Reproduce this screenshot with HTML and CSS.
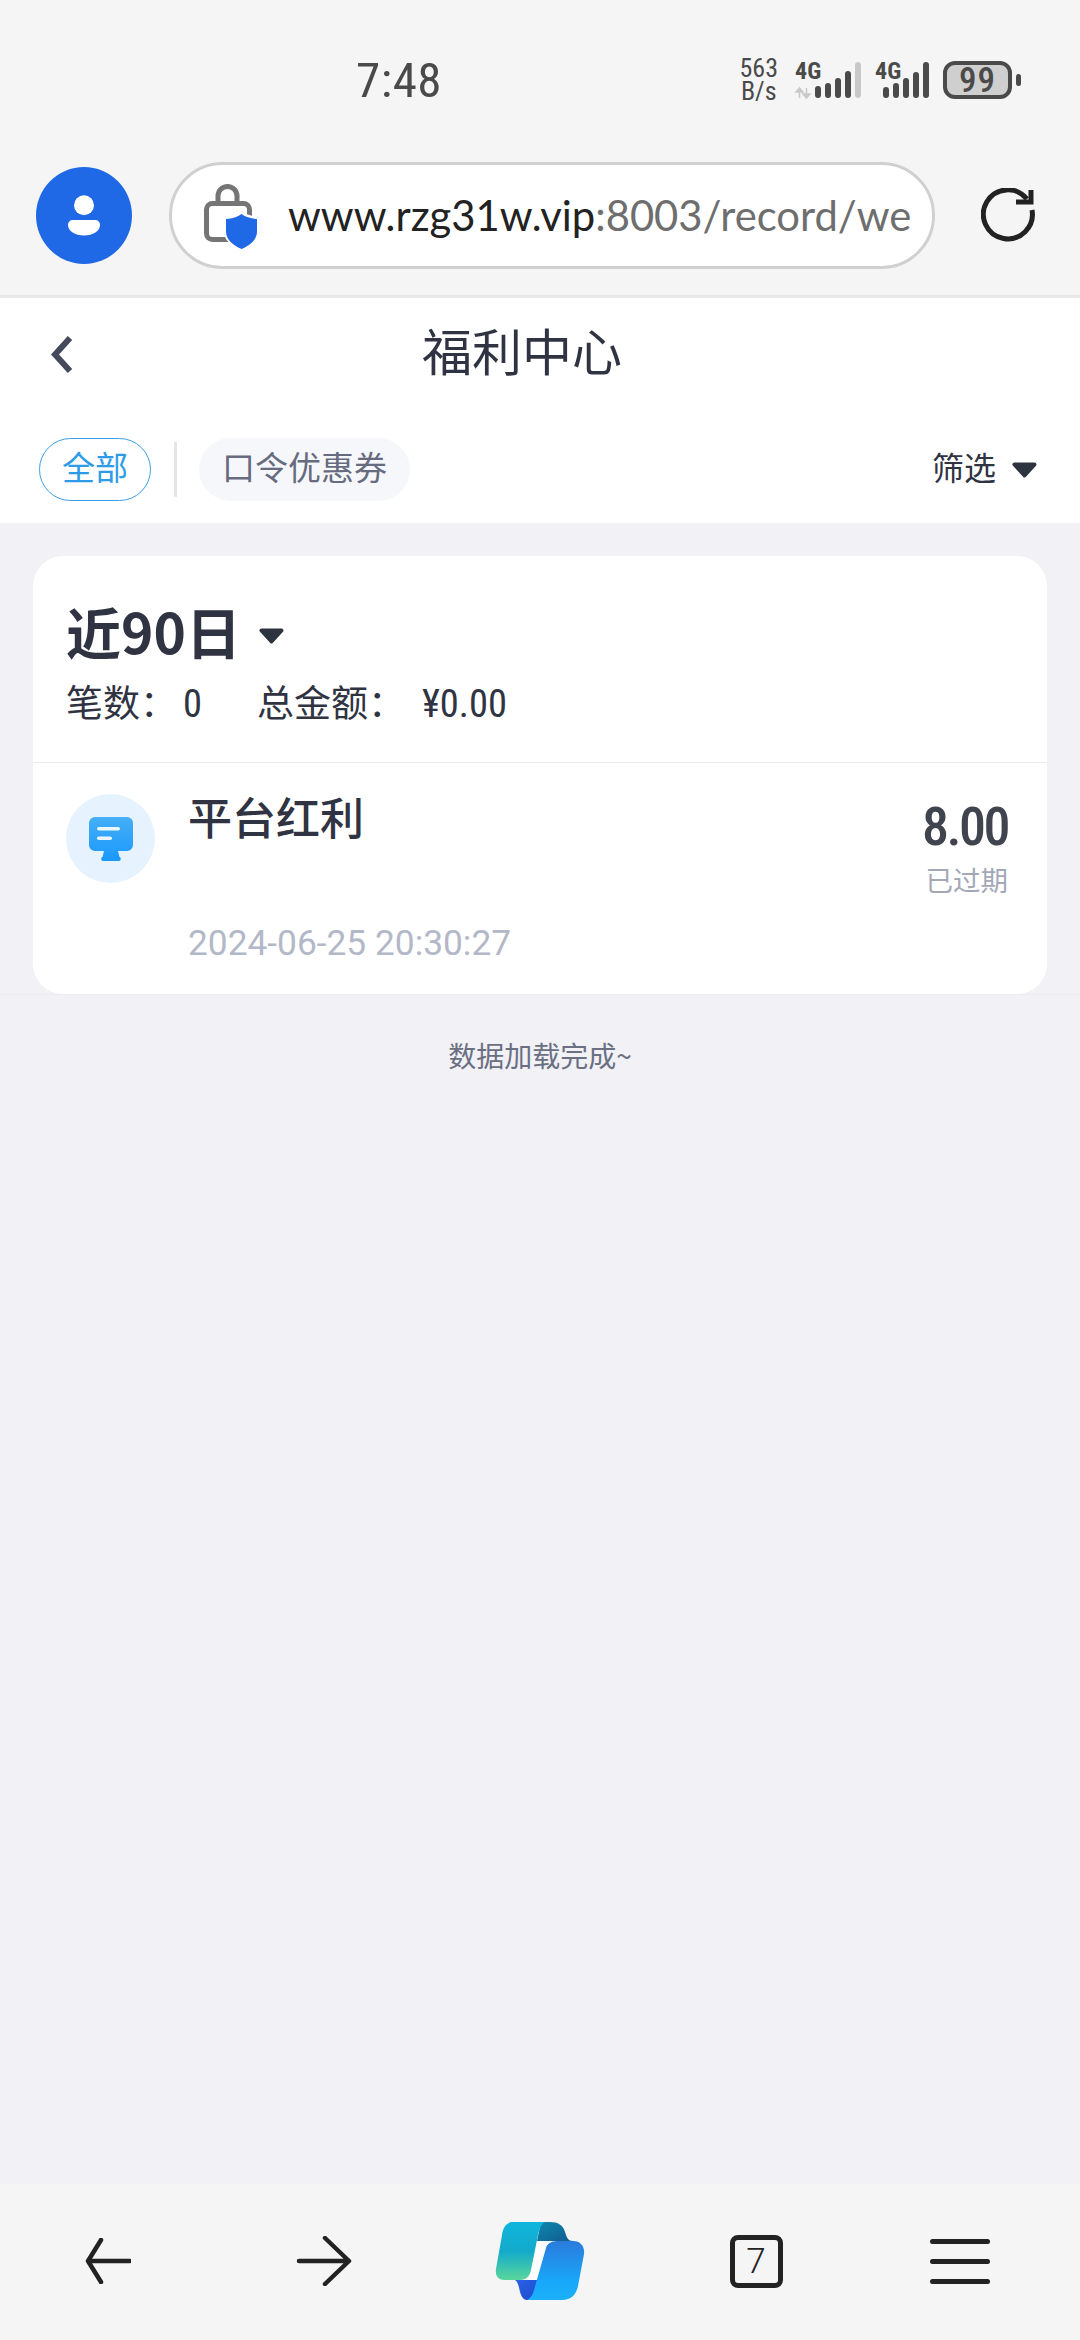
FILE: index.html
```html
<!DOCTYPE html>
<html lang="zh">
<head>
<meta charset="utf-8">
<title>福利中心</title>
<link rel="stylesheet" href="styles.css">
</head>
<body>
<div class="page">
  <header class="chrome">
    <div class="status">
      <span class="time">7:48</span>
      <span class="speed">563<br>B/s</span>
      <svg class="signals" width="134" height="40" viewBox="795 59 134 40">
        <text class="sig-text" x="795" y="78">4G</text>
        <path d="M799.5 97V88M799.5 87l-3.5 4h7zM806.5 87v9M806.5 97l3.5-4h-7z" fill="#c8c8c8" stroke="#c8c8c8" stroke-width="1.5"/>
        <g fill="#4a4a4a">
          <rect x="815" y="85" width="6" height="12" rx="3"/>
          <rect x="825" y="82" width="6" height="15" rx="3"/>
          <rect x="835" y="77" width="6" height="20" rx="3"/>
          <rect x="845" y="70" width="6" height="27" rx="3"/>
          <rect x="855" y="61" width="6" height="36" rx="3" fill="#c8c8c8"/>
        </g>
        <text class="sig-text" x="875" y="78">4G</text>
        <g fill="#4a4a4a">
          <rect x="883" y="86" width="6" height="11" rx="3"/>
          <rect x="893" y="82" width="6" height="15" rx="3"/>
          <rect x="903" y="77" width="6" height="20" rx="3"/>
          <rect x="913" y="71" width="6" height="26" rx="3"/>
          <rect x="923" y="61" width="6" height="36" rx="3"/>
        </g>
      </svg>
      <svg class="battery" width="78" height="38" viewBox="943 60 78 38">
        <rect x="945" y="62" width="65" height="34" rx="10" fill="#cfcfcf" stroke="#4a4a4a" stroke-width="4"/>
        <text class="bat-text" x="977.5" y="91" text-anchor="middle">99</text>
        <rect x="1016" y="73" width="5" height="12" rx="2.5" fill="#4a4a4a"/>
      </svg>
    </div>
    <div class="browser">
      <div class="avatar">
        <svg width="32" height="41" viewBox="0 0 32 41">
          <circle cx="16" cy="10.300" r="10" fill="#fff"/>
          <path d="M5 25h22c3 0 5 2 5 5 0 6-7 10.500-16 10.500S0 36 0 30c0-3 2-5 5-5z" fill="#fff"/>
        </svg>
      </div>
      <div class="url">
        <svg class="lock" width="53" height="66" viewBox="204 186 53 66">
          <path d="M218 205v-6a9.500 9.500 0 0 1 19 0v6" fill="none" stroke="#757575" stroke-width="5"/>
          <rect x="206.500" y="206.500" width="43" height="36" rx="6" fill="none" stroke="#757575" stroke-width="5"/>
          <path d="M241.500 214c4 3 9 5 15.500 5.500l2 1.500v14c0 8-7.500 14-17.500 18.500-10-4.500-17.500-10.500-17.500-18.500v-16c6.500-.5 13.500-2.500 17.500-5.500z" fill="#fff"/>
          <path d="M241.500 217c4 3 9 4.500 15.500 5v12.500c0 8-6.500 13.500-15.500 17.500-9-4-15.500-9.500-15.500-17.500V222c6.500-.5 11.500-2 15.500-5z" fill="#1f69e6"/>
        </svg>
        <span class="url-text">www.rzg31w.vip<span class="url-rest">:8003/record/we</span></span>
      </div>
      <svg class="reload" width="56" height="56" viewBox="0 0 56 56">
        <path d="M46 11A24.500 24.500 0 1 0 51 22" fill="none" stroke="#222" stroke-width="5"/>
        <path d="M35 14h15V2" fill="none" stroke="#222" stroke-width="5"/>
      </svg>
    </div>
  </header>

  <section class="head">
    <div class="nav">
      <svg class="back" width="22" height="39" viewBox="0 0 22 39">
        <path d="M19 3L4 19.500 19 36" fill="none" stroke="#444a5c" stroke-width="6"/>
      </svg>
      <h1 class="title">福利中心</h1>
    </div>
    <div class="tabs">
      <span class="tab tab-on">全部</span>
      <i class="tab-sep"></i>
      <span class="tab tab-off">口令优惠券</span>
      <span class="filter"><span class="filter-label">筛选</span>
        <svg class="caret" width="25" height="16" viewBox="0 0 25 16"><path d="M2.500 2.500h20L12.500 13.500z" fill="#2c3440" stroke="#2c3440" stroke-width="4" stroke-linejoin="round"/></svg>
      </span>
    </div>
  </section>

  <main class="body">
    <div class="band">
      <article class="card">
        <div class="card-head">
          <div class="range">近90日
            <svg class="caret range-caret" width="25" height="16" viewBox="0 0 25 16"><path d="M2.500 2.500h20L12.500 13.500z" fill="#2c3440" stroke="#2c3440" stroke-width="4" stroke-linejoin="round"/></svg>
          </div>
          <div class="totals">
            <span class="tot-count">笔数：<span class="din tot-num">0</span></span>
            <span>总金额：<span class="din tot-sum">¥0.00</span></span>
          </div>
        </div>
        <div class="item">
          <div class="item-icon">
            <svg width="44" height="44" viewBox="0 0 44 44">
              <defs><linearGradient id="mon" x1="0" y1="0" x2="0" y2="1"><stop offset="0" stop-color="#46aef5"/><stop offset="1" stop-color="#1a98ff"/></linearGradient></defs>
              <path d="M6 0h32a6 6 0 0 1 6 6v22a6 6 0 0 1-6 6H29l1.500 6c2 .5 1.500 4-.5 4H14c-2 0-2.500-3.500-.5-4L15 34H6a6 6 0 0 1-6-6V6a6 6 0 0 1 6-6z" fill="url(#mon)"/>
              <rect x="8" y="10" width="23" height="3.500" rx="1.700" fill="#fff" opacity=".9"/>
              <rect x="8" y="19.500" width="15" height="3.500" rx="1.700" fill="#fff" opacity=".9"/>
            </svg>
          </div>
          <div class="item-main">
            <div class="item-name">平台红利</div>
            <div class="item-date">2024-06-25 20:30:27</div>
          </div>
          <div class="item-side">
            <div class="item-amount">8.00</div>
            <div class="item-state">已过期</div>
          </div>
        </div>
      </article>
    </div>
    <p class="done">数据加载完成~</p>
  </main>

  <footer class="bar">
    <div class="bar-cell">
      <svg width="46" height="46" viewBox="0 0 46 46"><path d="M16 2L3 23l13 21M3 23h42" fill="none" stroke="#222" stroke-width="4.500" stroke-linecap="round" stroke-linejoin="round"/></svg>
    </div>
    <div class="bar-cell">
      <svg width="56" height="50" viewBox="0 0 56 50"><path d="M29 2l24 23-24 23M3 25h49" fill="none" stroke="#222" stroke-width="4.500" stroke-linecap="round" stroke-linejoin="round"/></svg>
    </div>
    <div class="bar-cell">
      <svg class="copilot" width="90" height="78" viewBox="0 0 90 78">
        <defs>
          <linearGradient id="cL" x1="0" y1="0" x2="0" y2="1"><stop offset="0" stop-color="#0fb5dd"/><stop offset=".5" stop-color="#13aacb"/><stop offset="1" stop-color="#5ad79c"/></linearGradient>
          <linearGradient id="cD" x1="0" y1="0" x2="1" y2="1"><stop offset="0" stop-color="#0d88ad"/><stop offset="1" stop-color="#115c8e"/></linearGradient>
          <linearGradient id="cR" x1="0" y1="0" x2="0" y2="1"><stop offset="0" stop-color="#2b7bdb"/><stop offset=".7" stop-color="#18a8fb"/><stop offset="1" stop-color="#1cb0f8"/></linearGradient>
          <linearGradient id="cB" x1="0" y1="0" x2="1" y2="1"><stop offset="0" stop-color="#2b62e8"/><stop offset="1" stop-color="#1a49c8"/></linearGradient>
        </defs>
        <path d="M46 0h9c8 0 13 3 15 10 2 6 3 9 8 9H42z" fill="url(#cD)"/>
        <path d="M20 58h26l-6 20H31c-3-1-5-4-6-8-1-5-2-10-5-12z" fill="url(#cB)"/>
        <path d="M42 19h14L46 58H33z" fill="#fff"/>
        <path d="M18 0h32c-4 2-6 8-7 13l-7 35c-1 6-5 10-11 10H9c-6 0-9-5-8-11L7 13C8 5 12 0 18 0z" fill="url(#cL)"/>
        <path d="M62 19h16c8 0 12 6 11 13l-6 32c-2 9-7 14-16 14H32c4-2 6-6 7-10l12-42c1-4 5-7 11-7z" fill="url(#cR)"/>
      </svg>
    </div>
    <div class="bar-cell">
      <span class="count">7</span>
    </div>
    <div class="bar-cell bar-menu">
      <span class="menu"><i></i><i></i><i></i></span>
    </div>
  </footer>
</div>
</body>
</html>
```

FILE: styles.css
```css
* { box-sizing: border-box; }
html, body { margin: 0; padding: 0; }
body { font-family: "Noto Sans CJK SC", "Noto Sans", sans-serif; color: #2f3342; }
.page { width: 1080px; height: 2340px; display: flex; flex-direction: column; background: #f1f1f6; overflow: hidden; }

.chrome { height: 298px; background: #f5f5f5; border-bottom: 3px solid #e8e8e8; flex: none; }
.status { height: 160px; padding: 0 59px 0 356px; display: flex; align-items: center; color: #4a4a4a; }
.time { font: 400 49px/1 "Roboto Condensed", Roboto, sans-serif; letter-spacing: .5px; color: #4a4a4a; }
.speed { margin-left: auto; font: 400 26px/23px "Roboto Condensed", Roboto, sans-serif; color: #4a4a4a; text-align: center; }
.signals { margin-left: 17px; overflow: visible; }
.sig-text { font: 700 24px "Roboto Condensed", Roboto, sans-serif; fill: #4a4a4a; }
.battery { margin-left: 14px; overflow: visible; }
.bat-text { font: 500 35px "Roboto Condensed", Roboto, sans-serif; letter-spacing: 1px; fill: #4a4a4a; }

.browser { display: flex; align-items: center; padding: 2px 0 26px 36px; }
.avatar { width: 96px; height: 97px; border-radius: 50%; background: #1f69e6; display: flex; align-items: center; justify-content: center; flex: none; }
.url { margin-left: 37px; width: 766px; height: 107px; border: 3px solid #d0d0d0; border-radius: 54px; background: #fff; display: flex; align-items: center; padding-left: 32px; overflow: hidden; }
.lock { flex: none; }
.url-text { margin-left: 31px; font: 400 41.800px/1 Lato, sans-serif; color: #222; white-space: nowrap; }
.url-rest { color: #6e6e6e; }
.reload { margin-left: 46px; flex: none; }

.head { background: #fff; flex: none; }
.nav { height: 112px; display: flex; align-items: center; padding-left: 51px; }
.back { flex: none; }
.title { margin: 0 0 10px 349px; font-size: 50px; font-weight: 400; line-height: 1; color: #2f3342; }
.tabs { display: flex; align-items: center; padding: 28px 43px 22px 39px; }
.tab { height: 63px; border-radius: 32px; font-size: 33px; padding-bottom: 8px; display: flex; align-items: center; justify-content: center; }
.tab-on { width: 112px; border: 1.500px solid #3a9fe4; color: #2d9be8; }
.tab-sep { width: 3px; height: 55px; margin: 0 22px 0 23px; background: #e4e6ea; }
.tab-off { width: 211px; background: #f6f7fa; color: #666b80; }
.filter { margin-left: auto; display: flex; align-items: center; gap: 16px; font-size: 32px; color: #2f3342; }
.filter-label { margin-bottom: 8px; }
.caret { flex: none; }

.band { padding: 33px 33px 0; border-bottom: 1px solid #ebecf0; }
.card { background: #fff; border-radius: 30px; height: 438px; overflow: hidden; }
.card-head { height: 207px; border-bottom: 1.500px solid #ebebef; padding: 42px 0 0 33px; }
.range { display: flex; align-items: center; gap: 18px; font-size: 55px; font-weight: 700; line-height: 64px; color: #2f3342; }
.range-caret { margin-top: 11px; }
.totals { display: flex; font-size: 37px; line-height: 56px; color: #2f3342; margin-top: 11px; }
.tot-count { width: 191px; }
.din { font: 400 38.500px/1 "Roboto Condensed", Roboto, sans-serif; color: #2f3342; }
.tot-num { margin-left: 6px; }
.tot-sum { margin-left: 17px; }

.item { display: flex; height: 230px; padding: 31px 39px 0 33px; }
.item-icon { width: 89px; height: 89px; border-radius: 50%; background: #e6f3ff; display: flex; align-items: center; justify-content: center; flex: none; }
.item-main { margin-left: 33px; flex: 1; }
.item-name { font-size: 44px; font-weight: 500; line-height: 56px; margin-top: -6px; color: #2f3342; }
.item-date { font: 400 35.300px/40px Roboto, sans-serif; color: #b3b8c8; margin-top: 79px; }
.item-side { text-align: right; }
.item-amount { font: 500 54px/60px "Roboto Condensed", Roboto, sans-serif; letter-spacing: -2.500px; color: #40444f; margin-top: 3px; }
.item-state { font-size: 27.500px; line-height: 36px; color: #a3a8b8; margin-top: 4px; }

.done { margin: 42px 0 0; text-align: center; font-size: 28px; line-height: 36px; color: #6a6f82; }
.body { flex: 1; }

.bar { flex: none; height: 156px; background: #f5f5f5; display: grid; grid-template-columns: repeat(5, 216px); align-items: center; padding-bottom: 2px; }
.bar-cell { display: flex; justify-content: center; align-items: center; }
.bar-menu { padding-right: 24px; }
.count { width: 53px; height: 53px; border: 5px solid #222; border-radius: 8px; display: flex; align-items: center; justify-content: center; font: 300 35px/1 Roboto, sans-serif; color: #222; }
.menu { width: 60px; display: flex; flex-direction: column; gap: 15px; }
.menu i { display: block; height: 5px; border-radius: 3px; background: #222; }
```
